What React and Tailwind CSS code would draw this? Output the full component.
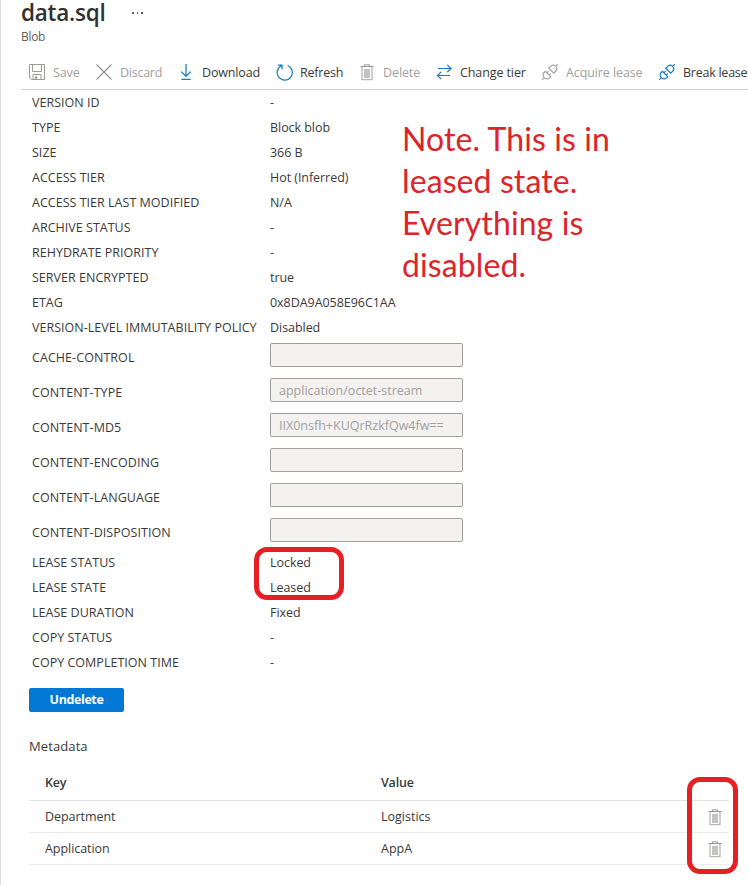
const SaveIcon = () => (
  <svg className="h-4 w-4" viewBox="0 0 16 16" fill="none" stroke="#9b9a99" strokeWidth="1">
    <path d="M.5.5h15v15h-13l-2-2zM3.5.5v7h9v-7M4 15.5v-5h8v5M6.5 12.5v3M7.5 12.5v3" />
  </svg>
);
const DiscardIcon = () => (
  <svg className="h-4 w-4" viewBox="0 0 16 16" fill="none" stroke="#8f8e8d" strokeWidth="1.1">
    <path d="M.5.5l15 15M15.5.5l-15 15" />
  </svg>
);
const DownloadIcon = () => (
  <svg className="h-4 w-4" viewBox="0 0 16 16" fill="none" stroke="#1b80bd" strokeWidth="1.3">
    <path d="M8 0v12M3.3 7.6L8 12.3l4.7-4.7M3.3 15.4h9.4" />
  </svg>
);
const RefreshIcon = () => (
  <svg className="h-[17px] w-[17px] shrink-0" viewBox="0 0 18 18" fill="none" stroke="#1b80bd" strokeWidth="1.3">
    <path d="M12.2 1.6A8 8 0 1 1 6 1.7M2 1.2h4.4v4.4" />
  </svg>
);
const TrashIcon = () => (
  <svg className="h-[17px] w-4" viewBox="0 0 16 17" fill="none" stroke="#b8b7b6">
    <path d="M5.5 2V.8h5V2" stroke="#9b9a99" />
    <path d="M1.5 2.5h13" stroke="#9b9a99" />
    <path d="M3 3v12.6h10V3" strokeWidth="1.3" />
    <path d="M5 5h6v9H5z" fill="#c4c3c2" stroke="none" />
  </svg>
);
const SwapIcon = () => (
  <svg className="h-4 w-4" viewBox="0 0 16 16" fill="none" stroke="#1b78c2" strokeWidth="1.2">
    <path d="M2 4.5h13M11.3.8L15 4.5l-3.7 3.7M14 11.5H1.5M5.2 7.8l-3.7 3.7 3.7 3.7" />
  </svg>
);
const PlugIcon = ({ color }) => (
  <svg className="h-4 w-4" viewBox="0 0 16 16" fill="none" stroke={color} strokeWidth="1.2">
    <g transform="translate(8 8) rotate(-45)">
      <path d="M-11 0h3M-2.8-3.8v7.6h-1.7a3.5 3.5 0 0 1-3.5-3.5v-.6a3.5 3.5 0 0 1 3.5-3.5zM-2.8-1.6h2.3M-2.8 1.6h2.3" />
      <path d="M11 0h-3M1.8-3.5v7h2.7a3.5 3.5 0 0 0 3.5-3.5a3.5 3.5 0 0 0-3.5-3.5z" />
    </g>
  </svg>
);

const disabled = "text-[#a19f9d]";
const enabled = "text-[#3b3a39]";
const commands = [
  { label: "Save", icon: <SaveIcon />, cls: `w-[67px] ${disabled}`, text: "tracking-[-0.1px]" },
  { label: "Discard", icon: <DiscardIcon />, cls: `w-[82px] ${disabled}`, text: "tracking-[-0.25px]" },
  { label: "Download", icon: <DownloadIcon />, cls: `w-[98px] ${enabled}`, text: "tracking-[-0.15px]" },
  { label: "Refresh", icon: <RefreshIcon />, cls: `w-[83px] ${enabled}`, text: "tracking-[-0.2px]" },
  { label: "Delete", icon: <TrashIcon />, cls: `w-[77px] ${disabled}`, text: "tracking-[-0.1px]" },
  { label: "Change tier", icon: <SwapIcon />, cls: `w-[106px] ${enabled}`, text: "tracking-[-0.1px]" },
  { label: "Acquire lease", icon: <PlugIcon color="#a6a5a4" />, cls: `w-[117px] ${disabled}`, text: "tracking-[-0.1px]" },
  { label: "Break lease", icon: <PlugIcon color="#1b78c2" />, cls: `w-[89px] ${enabled}`, text: "tracking-[-0.25px]" },
];

const properties = [
  ["VERSION ID", "-"],
  ["TYPE", "Block blob"],
  ["SIZE", "366 B"],
  ["ACCESS TIER", "Hot (Inferred)"],
  ["ACCESS TIER LAST MODIFIED", "N/A"],
  ["ARCHIVE STATUS", "-"],
  ["REHYDRATE PRIORITY", "-"],
  ["SERVER ENCRYPTED", "true"],
  ["ETAG", "0x8DA9A058E96C1AA"],
  ["VERSION-LEVEL IMMUTABILITY POLICY", "Disabled"],
];
const fields = [
  ["CACHE-CONTROL", ""],
  ["CONTENT-TYPE", "application/octet-stream"],
  ["CONTENT-MD5", "IIX0nsfh+KUQrRzkfQw4fw=="],
  ["CONTENT-ENCODING", ""],
  ["CONTENT-LANGUAGE", ""],
  ["CONTENT-DISPOSITION", ""],
];
const leases = [
  ["LEASE STATUS", "Locked"],
  ["LEASE STATE", "Leased"],
  ["LEASE DURATION", "Fixed"],
  ["COPY STATUS", "-"],
  ["COPY COMPLETION TIME", "-"],
];
const metadata = [
  ["Department", "Logistics"],
  ["Application", "AppA"],
];

const Row = ({ label, value }) => (
  <div className="flex h-[25px] items-center pt-0.5">
    <div className="w-[238px] shrink-0 tracking-[0.02px]">{label}</div>
    <div className="tracking-[-0.05px]">{value}</div>
  </div>
);

export default function App() {
  return (
    <div className="relative h-[885px] w-[748px] overflow-hidden whitespace-nowrap border-l border-[#dddddd] bg-white font-['Open_Sans','Noto_Sans',sans-serif] text-[12.5px] text-[#3b3a39]">
      <header className="h-[55px] pl-5">
        <div className="flex h-[26px] items-center">
          <h1 className="w-[111px] text-[22.5px] font-semibold leading-[26px] tracking-[-0.25px] text-[#323130]">data.sql</h1>
          <div className="flex gap-[3px]">
            <i className="h-[1.5px] w-[1.5px] bg-[#605e5c]" />
            <i className="h-[1.5px] w-[1.5px] bg-[#605e5c]" />
            <i className="h-[1.5px] w-[1.5px] bg-[#605e5c]" />
          </div>
        </div>
        <div className="mt-0.5 text-[12px] leading-[18px] tracking-[-0.3px] text-[#605e5c]">Blob</div>
      </header>

      <nav className="ml-5 flex h-[35px] border-b border-[#d2d0ce] pl-2">
        {commands.map((c) => (
          <div key={c.label} className={`flex h-[34px] shrink-0 items-center ${c.cls}`}>
            <span className="flex w-4 shrink-0 justify-center">{c.icon}</span>
            <span className={`ml-2 pt-0.5 ${c.text}`}>{c.label}</span>
          </div>
        ))}
      </nav>

      <main className="pl-[31px]">
        {properties.map(([k, v]) => <Row key={k} label={k} value={v} />)}
        {fields.map(([k, v]) => (
          <div key={k} className="flex h-[35px]">
            <div className="w-[238px] leading-[35px] tracking-[0.06px]">{k}</div>
            <div className="mt-[3px] flex h-6 w-[193px] items-center rounded-[2px] border border-[#a19f9d] bg-[#f3f2f1] pl-2 pt-0.5 text-[#a19f9d]">{v}</div>
          </div>
        ))}
        {leases.map(([k, v]) => <Row key={k} label={k} value={v} />)}
      </main>

      <section className="ml-7 w-[700px]">
        <button className="mt-[13px] block h-6 w-[95px] rounded-[2px] bg-[#0078d4] text-[12.5px] font-bold tracking-[-0.4px] text-white">Undelete</button>
        <h2 className="mt-6 text-[13px] leading-5 tracking-[0.1px]">Metadata</h2>
        <div className="mt-2 flex h-[37px] items-center border-b border-[#e4e2e0] pl-4 pt-0.5 font-semibold">
          <div className="w-[336px] tracking-[-0.2px]">Key</div>
          <div className="tracking-[-0.2px]">Value</div>
        </div>
        {metadata.map(([k, v]) => (
          <div key={k} className="flex h-8 items-center border-b border-[#edebe9] pl-4 pt-0.5">
            <div className="w-[336px] tracking-[-0.05px]">{k}</div>
            <div className="w-[326px]">{v}</div>
            <TrashIcon />
          </div>
        ))}
      </section>

      <p className="absolute left-[401px] top-[118px] font-['Lato','Open_Sans',sans-serif] text-[32px] leading-[42px] tracking-[0.1px] text-[#dc2429]">
        Note. This is in<br />leased state.<br />Everything is<br />disabled.
      </p>
      <div className="absolute left-[253px] top-[547px] h-[53px] w-[90px] rounded-[13px] border-[5px] border-[#e81e25]" />
      <div className="absolute left-[686px] top-[777px] h-[97px] w-[51px] rounded-[13px] border-[5px] border-[#e81e25]" />
    </div>
  );
}
